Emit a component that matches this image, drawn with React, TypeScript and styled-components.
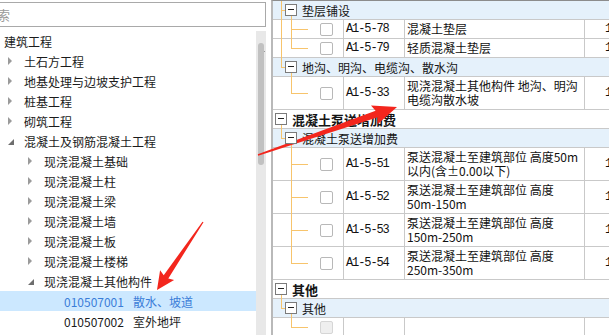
import React from "react";
import styled, { createGlobalStyle } from "styled-components";

const GlobalStyle = createGlobalStyle`
  html, body {
    margin: 0;
    padding: 0;
    background: #fff;
    overflow: hidden;
  }
  body {
    font-family: "Noto Sans CJK SC", "Noto Sans", sans-serif;
  }
`;

const line = "#f7c46c";
const grid = "#c9c9c9";

const Screen = styled.div`
  position: relative;
  display: flex;
  width: 609px;
  height: 335px;
  overflow: hidden;
  background: #fff;
`;

const LeftPanel = styled.div`
  width: 266px;
  flex: none;
  display: flex;
  flex-direction: column;
  overflow: hidden;
`;

const Search = styled.input`
  align-self: flex-start;
  box-sizing: border-box;
  width: 296px;
  height: 25px;
  margin: 2px 0 4px -30px;
  padding: 0 0 0 13px;
  border: 1px solid #a9a9a9;
  font: 13px "Noto Sans CJK SC", sans-serif;
  outline: none;

  &::placeholder {
    color: #9a9a9a;
  }
`;

const TreeArea = styled.div`
  flex: 1;
  display: flex;
  min-height: 0;
`;

const TreeList = styled.ul`
  flex: 1;
  margin: 0;
  padding: 0;
  list-style: none;
  overflow: hidden;
`;

const TreeRow = styled.li<{ $level: number; $selected?: boolean }>`
  height: 20px;
  display: flex;
  align-items: center;
  padding-left: ${(p) => (p.$level === 0 ? 4 : 4 + (p.$level - 1) * 20)}px;
  background: ${(p) => (p.$selected ? "#cce8ff" : "transparent")};
  color: ${(p) => (p.$selected ? "#3b7dd8" : "#1b1b1b")};
  font-size: 12px;
  white-space: nowrap;
`;

const Toggle = styled.span`
  width: 20px;
  flex: none;
  display: flex;
  align-items: center;
  padding-left: 4px;
  box-sizing: border-box;
`;

const CodeText = styled.span`
  margin-right: 9px;
`;

const ScrollTrack = styled.div`
  width: 10px;
  flex: none;
  background: #e8e8e8;
  display: flex;
  flex-direction: column;
  align-items: center;
`;

const ScrollArrow = styled.div`
  height: 12px;
  padding-top: 2px;
  box-sizing: border-box;
`;

const ScrollThumb = styled.div`
  width: 6px;
  height: 122px;
  border-radius: 3px;
  background: #c1c1c1;
`;

const Table = styled.div`
  flex: 1;
  margin-left: 5px;
  border-left: 2px solid #b9b9b9;
  border-top: 1px solid #8c8c8c;
  overflow: hidden;
  font-size: 12px;
  color: #111;
`;

const GroupRow = styled.div<{ $top?: boolean }>`
  position: relative;
  box-sizing: border-box;
  height: 19px;
  display: flex;
  align-items: center;
  gap: 5px;
  padding-left: ${(p) => (p.$top ? 2 : 12)}px;
  background: ${(p) => (p.$top ? "#fff" : "#e5f1fb")};
  border-bottom: 1px solid ${grid};
  font-weight: ${(p) => (p.$top ? 700 : 400)};
  font-size: ${(p) => (p.$top ? 13 : 12)}px;
  color: #151515;
  white-space: nowrap;
`;

const MinusBox = styled.span`
  position: relative;
  flex: none;
  box-sizing: border-box;
  width: 12px;
  height: 12px;
  border: 1px solid #7b7b7b;
  background: #fff;
  z-index: 1;

  &::after {
    content: "";
    position: absolute;
    left: 2px;
    right: 2px;
    top: 4px;
    height: 1px;
    background: #222;
  }
`;

const ItemRow = styled.div<{ $tall: boolean }>`
  display: grid;
  grid-template-columns: 71px 61px 180px 1fr;
  box-sizing: border-box;
  height: ${(p) => (p.$tall ? 33 : 19)}px;
  border-bottom: 1px solid ${grid};
`;

const Cell = styled.div`
  box-sizing: border-box;
  display: flex;
  align-items: center;
  border-right: 1px solid ${grid};
  min-width: 0;
`;

const TreeCell = styled(Cell)`
  position: relative;
  padding-left: 47px;
`;

const CodeCell = styled(Cell)`
  padding-left: 2px;
  font-family: "Liberation Mono", monospace;
  font-size: 12px;
  letter-spacing: -1.1px;
`;

const DescCell = styled(Cell)`
  flex-direction: column;
  align-items: flex-start;
  justify-content: center;
  padding-left: 2px;
  line-height: 14px;
  white-space: nowrap;
`;

const QtyCell = styled(Cell)`
  border-right: none;
  padding-left: 20px;
  font-family: "Liberation Mono", monospace;
`;

const Check = styled.span<{ $disabled?: boolean }>`
  width: 13px;
  height: 13px;
  box-sizing: border-box;
  border: 1px solid ${(p) => (p.$disabled ? "#d6d6d6" : "#b8b8b8")};
  border-radius: 2px;
  background: ${(p) => (p.$disabled ? "#efefef" : "#fff")};
`;

const VLine = styled.span<{ $x: number; $top: string; $bottom: string }>`
  position: absolute;
  left: ${(p) => p.$x}px;
  top: ${(p) => p.$top};
  bottom: ${(p) => p.$bottom};
  width: 1px;
  background: ${line};
`;

const HLine = styled.span<{ $x: number; $w: number }>`
  position: absolute;
  left: ${(p) => p.$x}px;
  width: ${(p) => p.$w}px;
  top: 50%;
  height: 1px;
  background: ${line};
`;

const Overlay = styled.svg`
  position: absolute;
  left: 0;
  top: 0;
  pointer-events: none;
`;

type TreeNode = {
  level: number;
  label: string;
  code?: string;
  toggle?: "open" | "closed";
  selected?: boolean;
};

const tree: TreeNode[] = [
  { level: 0, label: "建筑工程" },
  { level: 1, label: "土石方工程", toggle: "closed" },
  { level: 1, label: "地基处理与边坡支护工程", toggle: "closed" },
  { level: 1, label: "桩基工程", toggle: "closed" },
  { level: 1, label: "砌筑工程", toggle: "closed" },
  { level: 1, label: "混凝土及钢筋混凝土工程", toggle: "open" },
  { level: 2, label: "现浇混凝土基础", toggle: "closed" },
  { level: 2, label: "现浇混凝土柱", toggle: "closed" },
  { level: 2, label: "现浇混凝土梁", toggle: "closed" },
  { level: 2, label: "现浇混凝土墙", toggle: "closed" },
  { level: 2, label: "现浇混凝土板", toggle: "closed" },
  { level: 2, label: "现浇混凝土楼梯", toggle: "closed" },
  { level: 2, label: "现浇混凝土其他构件", toggle: "open" },
  { level: 3, code: "010507001", label: "散水、坡道", selected: true },
  { level: 3, code: "010507002", label: "室外地坪" },
];

type Row =
  | { kind: "top"; label: string }
  | { kind: "sub"; label: string; cont: boolean }
  | {
      kind: "item";
      code: string;
      desc: string[];
      outer: boolean;
      last: boolean;
      qty: string;
      disabled?: boolean;
    };

const pump = "泵送混凝土至建筑部位 高度";

const rows: Row[] = [
  { kind: "sub", label: "垫层铺设", cont: true },
  { kind: "item", code: "A1-5-78", desc: ["混凝土垫层"], outer: true, last: false, qty: "1" },
  { kind: "item", code: "A1-5-79", desc: ["轻质混凝土垫层"], outer: true, last: true, qty: "1" },
  { kind: "sub", label: "地沟、明沟、电缆沟、散水沟", cont: false },
  {
    kind: "item",
    code: "A1-5-33",
    desc: ["现浇混凝土其他构件 地沟、明沟", "电缆沟散水坡"],
    outer: false,
    last: true,
    qty: "1",
  },
  { kind: "top", label: "混凝土泵送增加费" },
  { kind: "sub", label: "混凝土泵送增加费", cont: false },
  { kind: "item", code: "A1-5-51", desc: [pump + "50m", "以内(含±0.00以下)"], outer: false, last: false, qty: "1" },
  { kind: "item", code: "A1-5-52", desc: [pump, "50m-150m"], outer: false, last: false, qty: "1" },
  { kind: "item", code: "A1-5-53", desc: [pump, "150m-250m"], outer: false, last: false, qty: "1" },
  { kind: "item", code: "A1-5-54", desc: [pump, "250m-350m"], outer: false, last: true, qty: "1" },
  { kind: "top", label: "其他" },
  { kind: "sub", label: "其他", cont: false },
  { kind: "item", code: "", desc: [], outer: false, last: true, qty: "", disabled: true },
];

const ToggleIcon = ({ state }: { state?: "open" | "closed" }) => {
  if (state === "closed")
    return (
      <svg width="5" height="8" viewBox="0 0 5 8">
        <polygon points="0,0 4,4 0,8" fill="#9a9a9a" />
      </svg>
    );
  if (state === "open")
    return (
      <svg width="6" height="6" viewBox="0 0 6 6" style={{ marginTop: 2 }}>
        <polygon points="6,0 6,6 0,6" fill="#6e6e6e" />
      </svg>
    );
  return null;
};

const TableRow = ({ row }: { row: Row }) => {
  if (row.kind === "top")
    return (
      <GroupRow $top>
        <VLine $x={8} $top="calc(50% + 6px)" $bottom="-1px" />
        <MinusBox />
        {row.label}
      </GroupRow>
    );

  if (row.kind === "sub")
    return (
      <GroupRow>
        <VLine $x={8} $top="0" $bottom={row.cont ? "-1px" : "calc(50% - 1px)"} />
        <HLine $x={8} $w={4} />
        <VLine $x={18} $top="calc(50% + 6px)" $bottom="-1px" />
        <MinusBox />
        {row.label}
      </GroupRow>
    );

  return (
    <ItemRow $tall={row.desc.length > 1}>
      <TreeCell>
        {row.outer && <VLine $x={8} $top="0" $bottom="-1px" />}
        <VLine $x={18} $top="0" $bottom={row.last ? "calc(50% - 1px)" : "-1px"} />
        <HLine $x={18} $w={17} />
        <Check $disabled={row.disabled} />
      </TreeCell>
      <CodeCell>{row.code}</CodeCell>
      <DescCell>
        {row.desc.map((d) => (
          <span key={d}>{d}</span>
        ))}
      </DescCell>
      <QtyCell>{row.qty}</QtyCell>
    </ItemRow>
  );
};

export default function App() {
  return (
    <>
      <GlobalStyle />
      <Screen>
        <LeftPanel>
          <Search placeholder="搜索" />
          <TreeArea>
            <TreeList>
              {tree.map((n) => (
                <TreeRow key={n.label} $level={n.level} $selected={n.selected}>
                  {n.level > 0 && (
                    <Toggle>
                      <ToggleIcon state={n.toggle} />
                    </Toggle>
                  )}
                  {n.code && <CodeText>{n.code}</CodeText>}
                  {n.label}
                </TreeRow>
              ))}
            </TreeList>
            <ScrollTrack>
              <ScrollArrow>
                <svg width="7" height="4" viewBox="0 0 7 4">
                  <polygon points="3.5,0 7,4 0,4" fill="#606060" />
                </svg>
              </ScrollArrow>
              <ScrollThumb />
            </ScrollTrack>
          </TreeArea>
        </LeftPanel>

        <Table>
          {rows.map((r, i) => (
            <TableRow key={i} row={r} />
          ))}
        </Table>

        <Overlay width="609" height="335" viewBox="0 0 609 335">
          <polygon
            fill="#f3261d"
            points="203.5,222.3 168.3,278.4 174.1,279.9 157,290 160.1,270.3 163.7,275.2 202.5,221.7"
          />
          <polygon
            fill="#f3261d"
            points="258.2,155.7 377.8,117.3 377.6,124.3 397,107 371,105.4 375.6,110.7 257.8,154.3"
          />
        </Overlay>
      </Screen>
    </>
  );
}
